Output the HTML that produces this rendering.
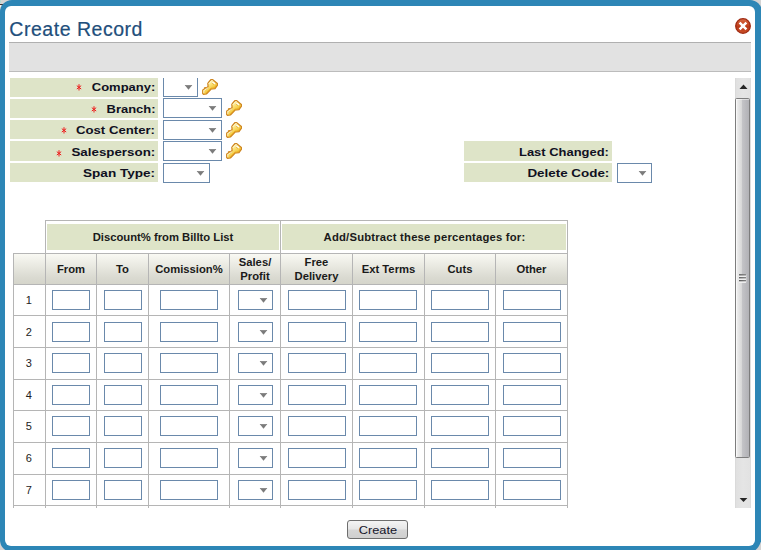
<!DOCTYPE html>
<html><head><meta charset="utf-8"><title>Create Record</title>
<style>
html,body{margin:0;padding:0}
body{width:761px;height:550px;overflow:hidden;position:relative;background:#d4d3d3;font-family:"Liberation Sans",sans-serif}
.a{position:absolute;box-sizing:border-box}
#frame{left:-0.5px;top:0px;width:762px;height:552px;border-radius:12px 12px 12px 12px / 12px 12px 18px 12px;background:#2d86b6}
#inner{left:4.7px;top:5.5px;width:750.3px;height:540.5px;border-radius:6px;background:#fff}
#title{left:9.3px;top:15.7px;font-size:19.5px;line-height:26px;color:#214e7b;white-space:nowrap;letter-spacing:0.53px;-webkit-text-stroke:0.2px #214e7b}
#bar{left:9px;top:42px;width:742px;height:30px;background:#e2e2e2;border-top:1px solid #b0b0b0;border-bottom:1px solid #bcbcbc}
.lb{background:#dee4c8}
.lt{font-weight:bold;font-size:11.5px;color:#10101f;white-space:nowrap;line-height:14px;height:14px}
.sel{background:#fff;border:1px solid #6a89ab}
.inp{background:#fff;border:1px solid #6a89ab}
.vl{width:1px;background:#b5b5b5}
.hl{height:1px;background:#b5b5b5}
.gh{background:#dee4c8;font-weight:bold;font-size:11.25px;color:#1a1a1a;text-align:center;line-height:26px}
.th{background:linear-gradient(#f9f9f3 0%,#f0f0e9 22%,#e5e5dd 50%,#dadad1 78%,#d5d5cb 100%);font-weight:bold;font-size:11.25px;color:#1a1a1a;text-align:center;display:flex;align-items:center;justify-content:center;line-height:14px}
.rn{font-size:11px;color:#222;text-align:center;width:31px;left:13.3px;line-height:14px}
#btn{left:347px;top:520px;width:61px;height:19px;border:1px solid #6e6e6e;border-radius:3px;background:linear-gradient(#f4f4f4 0%,#e6e6e6 48%,#d6d6d6 52%,#cfcfcf 100%);font-size:11.3px;line-height:17px;text-align:center;color:#14142a}
#btn span{display:inline-block;transform:scaleX(1.13);position:relative;top:1.2px;left:0px}
#sbtrack{left:735px;top:78px;width:16px;height:430px;background:linear-gradient(90deg,#e0e0e0,#e5e5e5 50%,#e2e2e2);border-left:1px solid #dadada;border-right:1px solid #dddddd}
#thumb{left:735px;top:98px;width:15px;height:360px;border:1px solid #7d7d7d;border-radius:1.5px;background:linear-gradient(90deg,#f2f2f2 0%,#e4e4e4 22%,#d6d6d6 46%,#c4c4c7 48%,#b8b8bc 80%,#b2b2b6 100%);box-shadow:inset 1px 1px 0 rgba(255,255,255,0.5)}
</style></head>
<body>
<div class="a" style="left:0;top:0;width:1px;height:3px;background:#b4d9d2"></div><div class="a" style="left:0;top:4px;width:3px;height:1px;background:#3d3333"></div><div class="a" style="left:0;top:5px;width:1px;height:2px;background:#f2f2f2"></div><div class="a" id="frame"></div><div class="a" id="inner"></div>
<div class="a" id="title">Create Record</div>
<svg class="a" style="left:735px;top:18px" width="16" height="16" viewBox="0 0 16 16"><defs><linearGradient id="cg" x1="0" y1="0" x2="0" y2="1"><stop offset="0" stop-color="#d66a44"/><stop offset="0.45" stop-color="#c4441f"/><stop offset="0.55" stop-color="#b93a18"/><stop offset="1" stop-color="#cc5029"/></linearGradient></defs><circle cx="8" cy="8" r="7.3" fill="url(#cg)" stroke="#a02a12" stroke-width="1.3"/><path d="M4.6,4.6 L11.4,11.4 M11.4,4.6 L4.6,11.4" stroke="#fff" stroke-width="2.5"/></svg>
<div class="a" id="bar"></div>
<div class="a lb" style="left:10px;top:78px;width:148px;height:19px"></div>
<div class="a lt" style="right:605.6px;top:80.01px;transform:scaleX(1.128);transform-origin:100% 50%">Company:</div>
<svg class="a" style="left:75.05px;top:83.4px" width="8" height="9" viewBox="0 0 8 9"><path d="M4,1.2 V7.5 M1.8,2.7 L6.2,6.0 M6.2,2.7 L1.8,6.0" stroke="#ee1c1c" stroke-width="1.0" fill="none"/></svg>
<div class="a lb" style="left:10px;top:99px;width:148px;height:19px"></div>
<div class="a lt" style="right:605.7px;top:101.51px;transform:scaleX(1.125);transform-origin:100% 50%">Branch:</div>
<svg class="a" style="left:90.45px;top:104.9px" width="8" height="9" viewBox="0 0 8 9"><path d="M4,1.2 V7.5 M1.8,2.7 L6.2,6.0 M6.2,2.7 L1.8,6.0" stroke="#ee1c1c" stroke-width="1.0" fill="none"/></svg>
<div class="a lb" style="left:10px;top:120px;width:148px;height:19px"></div>
<div class="a lt" style="right:606.1px;top:122.61px;transform:scaleX(1.145);transform-origin:100% 50%">Cost Center:</div>
<svg class="a" style="left:60.349999999999994px;top:126.0px" width="8" height="9" viewBox="0 0 8 9"><path d="M4,1.2 V7.5 M1.8,2.7 L6.2,6.0 M6.2,2.7 L1.8,6.0" stroke="#ee1c1c" stroke-width="1.0" fill="none"/></svg>
<div class="a lb" style="left:10px;top:141px;width:148px;height:20px"></div>
<div class="a lt" style="right:605.7px;top:145.11px;transform:scaleX(1.16);transform-origin:100% 50%">Salesperson:</div>
<svg class="a" style="left:55.15px;top:148.5px" width="8" height="9" viewBox="0 0 8 9"><path d="M4,1.2 V7.5 M1.8,2.7 L6.2,6.0 M6.2,2.7 L1.8,6.0" stroke="#ee1c1c" stroke-width="1.0" fill="none"/></svg>
<div class="a lb" style="left:10px;top:163px;width:148px;height:19px"></div>
<div class="a lt" style="right:605.7px;top:165.61px;transform:scaleX(1.18);transform-origin:100% 50%">Span Type:</div>
<div class="a" style="left:163px;top:78px;width:35px;height:19px;overflow:hidden"><div class="a sel" style="left:0;top:-1px;width:35px;height:20px"><svg class="a" style="right:4px;top:7px" width="9" height="6" viewBox="0 0 9 6"><path d="M0.7,0 H8.3 L4.5,4.7 Z" fill="#7b7b7b"/><rect x="1" y="0" width="7" height="1" fill="#8c8c8c"/></svg></div></div>
<div class="a sel" style="left:163px;top:98px;width:59px;height:20px"><svg class="a" style="right:4px;top:7px" width="9" height="6" viewBox="0 0 9 6"><path d="M0.7,0 H8.3 L4.5,4.7 Z" fill="#7b7b7b"/><rect x="1" y="0" width="7" height="1" fill="#8c8c8c"/></svg></div>
<div class="a sel" style="left:163px;top:120px;width:59px;height:20px"><svg class="a" style="right:4px;top:7px" width="9" height="6" viewBox="0 0 9 6"><path d="M0.7,0 H8.3 L4.5,4.7 Z" fill="#7b7b7b"/><rect x="1" y="0" width="7" height="1" fill="#8c8c8c"/></svg></div>
<div class="a sel" style="left:163px;top:141px;width:59px;height:20px"><svg class="a" style="right:4px;top:7px" width="9" height="6" viewBox="0 0 9 6"><path d="M0.7,0 H8.3 L4.5,4.7 Z" fill="#7b7b7b"/><rect x="1" y="0" width="7" height="1" fill="#8c8c8c"/></svg></div>
<div class="a sel" style="left:163px;top:163px;width:47px;height:20px"><svg class="a" style="right:4px;top:7px" width="9" height="6" viewBox="0 0 9 6"><path d="M0.7,0 H8.3 L4.5,4.7 Z" fill="#7b7b7b"/><rect x="1" y="0" width="7" height="1" fill="#8c8c8c"/></svg></div>
<svg class="a" style="left:202px;top:79px" width="16" height="16" viewBox="0 0 16 16"><defs><linearGradient id="kg0" x1="0.25" y1="0.15" x2="0.7" y2="0.8"><stop offset="0" stop-color="#fff6c0"/><stop offset="0.4" stop-color="#fbe27c"/><stop offset="0.75" stop-color="#f4c93f"/><stop offset="1" stop-color="#eab126"/></linearGradient></defs><path d="M9.1,0.55 L10.5,0.55 L15.4,4.4 L15.5,6.2 L13.0,9.6 L10.4,10.0 L9.4,9.8 L4.4,15.0 L1.5,15.3 L0.7,14.5 L0.7,11.0 L2.3,10.2 L2.5,8.9 L3.7,8.7 L4.3,9.5 L5.5,8.0 L6.1,7.5 L5.8,4.4 L6.8,3.0 Z" fill="url(#kg0)" stroke="#cf8620" stroke-width="1.25" stroke-linejoin="round"/><path d="M7.0,4.6 L9.6,1.7 L10.2,1.7" stroke="#fffbe2" stroke-width="0.9" fill="none" stroke-linecap="round"/><path d="M1.8,11.6 L1.8,13.9 M2.2,11.3 L5.6,9.0" stroke="#fffbe2" stroke-width="0.9" fill="none" stroke-linecap="round" opacity="0.9"/><path d="M4.6,13.8 L9.2,9.0 L10.6,9.0 L12.5,8.7 L14.3,6.0" stroke="#e9ab22" stroke-width="0.9" fill="none" stroke-linejoin="round" opacity="0.85"/><path d="M10.9,3.4 L12.6,4.6" stroke="#fffef8" stroke-width="1.3" stroke-linecap="round"/><path d="M10.4,4.4 L12.0,5.6" stroke="#dd9f25" stroke-width="0.8" stroke-linecap="round" opacity="0.75"/></svg>
<svg class="a" style="left:226px;top:100px" width="16" height="16" viewBox="0 0 16 16"><defs><linearGradient id="kg1" x1="0.25" y1="0.15" x2="0.7" y2="0.8"><stop offset="0" stop-color="#fff6c0"/><stop offset="0.4" stop-color="#fbe27c"/><stop offset="0.75" stop-color="#f4c93f"/><stop offset="1" stop-color="#eab126"/></linearGradient></defs><path d="M9.1,0.55 L10.5,0.55 L15.4,4.4 L15.5,6.2 L13.0,9.6 L10.4,10.0 L9.4,9.8 L4.4,15.0 L1.5,15.3 L0.7,14.5 L0.7,11.0 L2.3,10.2 L2.5,8.9 L3.7,8.7 L4.3,9.5 L5.5,8.0 L6.1,7.5 L5.8,4.4 L6.8,3.0 Z" fill="url(#kg1)" stroke="#cf8620" stroke-width="1.25" stroke-linejoin="round"/><path d="M7.0,4.6 L9.6,1.7 L10.2,1.7" stroke="#fffbe2" stroke-width="0.9" fill="none" stroke-linecap="round"/><path d="M1.8,11.6 L1.8,13.9 M2.2,11.3 L5.6,9.0" stroke="#fffbe2" stroke-width="0.9" fill="none" stroke-linecap="round" opacity="0.9"/><path d="M4.6,13.8 L9.2,9.0 L10.6,9.0 L12.5,8.7 L14.3,6.0" stroke="#e9ab22" stroke-width="0.9" fill="none" stroke-linejoin="round" opacity="0.85"/><path d="M10.9,3.4 L12.6,4.6" stroke="#fffef8" stroke-width="1.3" stroke-linecap="round"/><path d="M10.4,4.4 L12.0,5.6" stroke="#dd9f25" stroke-width="0.8" stroke-linecap="round" opacity="0.75"/></svg>
<svg class="a" style="left:226px;top:122px" width="16" height="16" viewBox="0 0 16 16"><defs><linearGradient id="kg2" x1="0.25" y1="0.15" x2="0.7" y2="0.8"><stop offset="0" stop-color="#fff6c0"/><stop offset="0.4" stop-color="#fbe27c"/><stop offset="0.75" stop-color="#f4c93f"/><stop offset="1" stop-color="#eab126"/></linearGradient></defs><path d="M9.1,0.55 L10.5,0.55 L15.4,4.4 L15.5,6.2 L13.0,9.6 L10.4,10.0 L9.4,9.8 L4.4,15.0 L1.5,15.3 L0.7,14.5 L0.7,11.0 L2.3,10.2 L2.5,8.9 L3.7,8.7 L4.3,9.5 L5.5,8.0 L6.1,7.5 L5.8,4.4 L6.8,3.0 Z" fill="url(#kg2)" stroke="#cf8620" stroke-width="1.25" stroke-linejoin="round"/><path d="M7.0,4.6 L9.6,1.7 L10.2,1.7" stroke="#fffbe2" stroke-width="0.9" fill="none" stroke-linecap="round"/><path d="M1.8,11.6 L1.8,13.9 M2.2,11.3 L5.6,9.0" stroke="#fffbe2" stroke-width="0.9" fill="none" stroke-linecap="round" opacity="0.9"/><path d="M4.6,13.8 L9.2,9.0 L10.6,9.0 L12.5,8.7 L14.3,6.0" stroke="#e9ab22" stroke-width="0.9" fill="none" stroke-linejoin="round" opacity="0.85"/><path d="M10.9,3.4 L12.6,4.6" stroke="#fffef8" stroke-width="1.3" stroke-linecap="round"/><path d="M10.4,4.4 L12.0,5.6" stroke="#dd9f25" stroke-width="0.8" stroke-linecap="round" opacity="0.75"/></svg>
<svg class="a" style="left:226px;top:143px" width="16" height="16" viewBox="0 0 16 16"><defs><linearGradient id="kg3" x1="0.25" y1="0.15" x2="0.7" y2="0.8"><stop offset="0" stop-color="#fff6c0"/><stop offset="0.4" stop-color="#fbe27c"/><stop offset="0.75" stop-color="#f4c93f"/><stop offset="1" stop-color="#eab126"/></linearGradient></defs><path d="M9.1,0.55 L10.5,0.55 L15.4,4.4 L15.5,6.2 L13.0,9.6 L10.4,10.0 L9.4,9.8 L4.4,15.0 L1.5,15.3 L0.7,14.5 L0.7,11.0 L2.3,10.2 L2.5,8.9 L3.7,8.7 L4.3,9.5 L5.5,8.0 L6.1,7.5 L5.8,4.4 L6.8,3.0 Z" fill="url(#kg3)" stroke="#cf8620" stroke-width="1.25" stroke-linejoin="round"/><path d="M7.0,4.6 L9.6,1.7 L10.2,1.7" stroke="#fffbe2" stroke-width="0.9" fill="none" stroke-linecap="round"/><path d="M1.8,11.6 L1.8,13.9 M2.2,11.3 L5.6,9.0" stroke="#fffbe2" stroke-width="0.9" fill="none" stroke-linecap="round" opacity="0.9"/><path d="M4.6,13.8 L9.2,9.0 L10.6,9.0 L12.5,8.7 L14.3,6.0" stroke="#e9ab22" stroke-width="0.9" fill="none" stroke-linejoin="round" opacity="0.85"/><path d="M10.9,3.4 L12.6,4.6" stroke="#fffef8" stroke-width="1.3" stroke-linecap="round"/><path d="M10.4,4.4 L12.0,5.6" stroke="#dd9f25" stroke-width="0.8" stroke-linecap="round" opacity="0.75"/></svg>
<div class="a lb" style="left:464px;top:141px;width:148px;height:20px"></div>
<div class="a lt" style="right:152.39999999999998px;top:145.11px;transform:scaleX(1.125);transform-origin:100% 50%">Last Changed:</div>
<div class="a lb" style="left:464px;top:163px;width:148px;height:19px"></div>
<div class="a lt" style="right:151.79999999999995px;top:165.61px;transform:scaleX(1.165);transform-origin:100% 50%">Delete Code:</div>
<div class="a sel" style="left:617px;top:163px;width:35px;height:20px"><svg class="a" style="right:4px;top:7px" width="9" height="6" viewBox="0 0 9 6"><path d="M0.7,0 H8.3 L4.5,4.7 Z" fill="#7b7b7b"/><rect x="1" y="0" width="7" height="1" fill="#8c8c8c"/></svg></div>
<div class="a hl" style="left:45px;top:220px;width:523px"></div>
<div class="a gh" style="left:47px;top:224px;width:232px;height:26px">Discount% from Billto List</div>
<div class="a gh" style="left:282px;top:224px;width:284px;height:26px;letter-spacing:0.21px;text-indent:1px">Add/Subtract these percentages for:</div>
<div class="a vl" style="left:45px;top:220px;height:34px"></div>
<div class="a vl" style="left:280px;top:220px;height:34px"></div>
<div class="a vl" style="left:567px;top:220px;height:34px"></div>
<div class="a th" style="left:14px;top:254px;width:31px;height:30px"><span></span></div>
<div class="a th" style="left:46px;top:254px;width:50px;height:30px"><span>From</span></div>
<div class="a th" style="left:97px;top:254px;width:51px;height:30px"><span>To</span></div>
<div class="a th" style="left:149px;top:254px;width:80px;height:30px"><span>Comission%</span></div>
<div class="a th" style="left:230px;top:254px;width:50px;height:30px"><span>Sales/<br>Profit</span></div>
<div class="a th" style="left:281px;top:254px;width:71px;height:30px"><span>Free<br>Delivery</span></div>
<div class="a th" style="left:353px;top:254px;width:71px;height:30px"><span>Ext Terms</span></div>
<div class="a th" style="left:425px;top:254px;width:70px;height:30px"><span>Cuts</span></div>
<div class="a th" style="left:496px;top:254px;width:71px;height:30px"><span>Other</span></div>
<div class="a hl" style="left:13px;top:253px;width:555px"></div>
<div class="a hl" style="left:13px;top:284px;width:555px"></div>
<div class="a hl" style="left:13px;top:315px;width:555px"></div>
<div class="a hl" style="left:13px;top:347px;width:555px"></div>
<div class="a hl" style="left:13px;top:379px;width:555px"></div>
<div class="a hl" style="left:13px;top:410px;width:555px"></div>
<div class="a hl" style="left:13px;top:442px;width:555px"></div>
<div class="a hl" style="left:13px;top:474px;width:555px"></div>
<div class="a hl" style="left:13px;top:505px;width:555px"></div>
<div class="a vl" style="left:13px;top:253px;height:255px"></div>
<div class="a vl" style="left:45px;top:253px;height:255px"></div>
<div class="a vl" style="left:96px;top:253px;height:255px"></div>
<div class="a vl" style="left:148px;top:253px;height:255px"></div>
<div class="a vl" style="left:229px;top:253px;height:255px"></div>
<div class="a vl" style="left:280px;top:253px;height:255px"></div>
<div class="a vl" style="left:352px;top:253px;height:255px"></div>
<div class="a vl" style="left:424px;top:253px;height:255px"></div>
<div class="a vl" style="left:495px;top:253px;height:255px"></div>
<div class="a vl" style="left:567px;top:253px;height:255px"></div>
<div class="a rn" style="top:293px">1</div>
<div class="a inp" style="left:52px;top:290px;width:38px;height:20px"></div>
<div class="a inp" style="left:104px;top:290px;width:38px;height:20px"></div>
<div class="a inp" style="left:160px;top:290px;width:58px;height:20px"></div>
<div class="a sel" style="left:238px;top:290px;width:35px;height:20px"><svg class="a" style="right:4px;top:7px" width="9" height="6" viewBox="0 0 9 6"><path d="M0.7,0 H8.3 L4.5,4.7 Z" fill="#7b7b7b"/><rect x="1" y="0" width="7" height="1" fill="#8c8c8c"/></svg></div>
<div class="a inp" style="left:288px;top:290px;width:58px;height:20px"></div>
<div class="a inp" style="left:359px;top:290px;width:58px;height:20px"></div>
<div class="a inp" style="left:431px;top:290px;width:58px;height:20px"></div>
<div class="a inp" style="left:503px;top:290px;width:58px;height:20px"></div>
<div class="a rn" style="top:325px">2</div>
<div class="a inp" style="left:52px;top:322px;width:38px;height:20px"></div>
<div class="a inp" style="left:104px;top:322px;width:38px;height:20px"></div>
<div class="a inp" style="left:160px;top:322px;width:58px;height:20px"></div>
<div class="a sel" style="left:238px;top:322px;width:35px;height:20px"><svg class="a" style="right:4px;top:7px" width="9" height="6" viewBox="0 0 9 6"><path d="M0.7,0 H8.3 L4.5,4.7 Z" fill="#7b7b7b"/><rect x="1" y="0" width="7" height="1" fill="#8c8c8c"/></svg></div>
<div class="a inp" style="left:288px;top:322px;width:58px;height:20px"></div>
<div class="a inp" style="left:359px;top:322px;width:58px;height:20px"></div>
<div class="a inp" style="left:431px;top:322px;width:58px;height:20px"></div>
<div class="a inp" style="left:503px;top:322px;width:58px;height:20px"></div>
<div class="a rn" style="top:356px">3</div>
<div class="a inp" style="left:52px;top:353px;width:38px;height:20px"></div>
<div class="a inp" style="left:104px;top:353px;width:38px;height:20px"></div>
<div class="a inp" style="left:160px;top:353px;width:58px;height:20px"></div>
<div class="a sel" style="left:238px;top:353px;width:35px;height:20px"><svg class="a" style="right:4px;top:7px" width="9" height="6" viewBox="0 0 9 6"><path d="M0.7,0 H8.3 L4.5,4.7 Z" fill="#7b7b7b"/><rect x="1" y="0" width="7" height="1" fill="#8c8c8c"/></svg></div>
<div class="a inp" style="left:288px;top:353px;width:58px;height:20px"></div>
<div class="a inp" style="left:359px;top:353px;width:58px;height:20px"></div>
<div class="a inp" style="left:431px;top:353px;width:58px;height:20px"></div>
<div class="a inp" style="left:503px;top:353px;width:58px;height:20px"></div>
<div class="a rn" style="top:388px">4</div>
<div class="a inp" style="left:52px;top:385px;width:38px;height:20px"></div>
<div class="a inp" style="left:104px;top:385px;width:38px;height:20px"></div>
<div class="a inp" style="left:160px;top:385px;width:58px;height:20px"></div>
<div class="a sel" style="left:238px;top:385px;width:35px;height:20px"><svg class="a" style="right:4px;top:7px" width="9" height="6" viewBox="0 0 9 6"><path d="M0.7,0 H8.3 L4.5,4.7 Z" fill="#7b7b7b"/><rect x="1" y="0" width="7" height="1" fill="#8c8c8c"/></svg></div>
<div class="a inp" style="left:288px;top:385px;width:58px;height:20px"></div>
<div class="a inp" style="left:359px;top:385px;width:58px;height:20px"></div>
<div class="a inp" style="left:431px;top:385px;width:58px;height:20px"></div>
<div class="a inp" style="left:503px;top:385px;width:58px;height:20px"></div>
<div class="a rn" style="top:419px">5</div>
<div class="a inp" style="left:52px;top:416px;width:38px;height:20px"></div>
<div class="a inp" style="left:104px;top:416px;width:38px;height:20px"></div>
<div class="a inp" style="left:160px;top:416px;width:58px;height:20px"></div>
<div class="a sel" style="left:238px;top:416px;width:35px;height:20px"><svg class="a" style="right:4px;top:7px" width="9" height="6" viewBox="0 0 9 6"><path d="M0.7,0 H8.3 L4.5,4.7 Z" fill="#7b7b7b"/><rect x="1" y="0" width="7" height="1" fill="#8c8c8c"/></svg></div>
<div class="a inp" style="left:288px;top:416px;width:58px;height:20px"></div>
<div class="a inp" style="left:359px;top:416px;width:58px;height:20px"></div>
<div class="a inp" style="left:431px;top:416px;width:58px;height:20px"></div>
<div class="a inp" style="left:503px;top:416px;width:58px;height:20px"></div>
<div class="a rn" style="top:451px">6</div>
<div class="a inp" style="left:52px;top:448px;width:38px;height:20px"></div>
<div class="a inp" style="left:104px;top:448px;width:38px;height:20px"></div>
<div class="a inp" style="left:160px;top:448px;width:58px;height:20px"></div>
<div class="a sel" style="left:238px;top:448px;width:35px;height:20px"><svg class="a" style="right:4px;top:7px" width="9" height="6" viewBox="0 0 9 6"><path d="M0.7,0 H8.3 L4.5,4.7 Z" fill="#7b7b7b"/><rect x="1" y="0" width="7" height="1" fill="#8c8c8c"/></svg></div>
<div class="a inp" style="left:288px;top:448px;width:58px;height:20px"></div>
<div class="a inp" style="left:359px;top:448px;width:58px;height:20px"></div>
<div class="a inp" style="left:431px;top:448px;width:58px;height:20px"></div>
<div class="a inp" style="left:503px;top:448px;width:58px;height:20px"></div>
<div class="a rn" style="top:483px">7</div>
<div class="a inp" style="left:52px;top:480px;width:38px;height:20px"></div>
<div class="a inp" style="left:104px;top:480px;width:38px;height:20px"></div>
<div class="a inp" style="left:160px;top:480px;width:58px;height:20px"></div>
<div class="a sel" style="left:238px;top:480px;width:35px;height:20px"><svg class="a" style="right:4px;top:7px" width="9" height="6" viewBox="0 0 9 6"><path d="M0.7,0 H8.3 L4.5,4.7 Z" fill="#7b7b7b"/><rect x="1" y="0" width="7" height="1" fill="#8c8c8c"/></svg></div>
<div class="a inp" style="left:288px;top:480px;width:58px;height:20px"></div>
<div class="a inp" style="left:359px;top:480px;width:58px;height:20px"></div>
<div class="a inp" style="left:431px;top:480px;width:58px;height:20px"></div>
<div class="a inp" style="left:503px;top:480px;width:58px;height:20px"></div>
<div class="a" id="sbtrack"></div>
<svg class="a" style="left:735px;top:78px" width="16" height="20" viewBox="0 0 16 20"><path d="M4.5,11 L8.5,6.5 L12.5,11 Z" fill="#262626"/></svg>
<svg class="a" style="left:735px;top:488px" width="16" height="20" viewBox="0 0 16 20"><path d="M4.6,10 L12.4,10 L8.5,14 Z" fill="#262626"/></svg>
<div class="a" id="thumb"></div>
<svg class="a" style="left:738px;top:272px" width="10" height="12" viewBox="0 0 10 12"><defs><linearGradient id="gg" x1="0" y1="0" x2="1" y2="0"><stop offset="0" stop-color="#1c1c1c"/><stop offset="1" stop-color="#5a5a5a"/></linearGradient></defs><rect x="0.8" y="2.2" width="7.6" height="8.8" rx="1" fill="#ececec" opacity="0.8"/><g fill="url(#gg)"><rect x="1" y="2.4" width="7" height="1.2"/><rect x="1" y="5.35" width="7" height="1.2"/><rect x="1" y="8.3" width="7" height="1.2"/></g><g fill="#fafafa"><rect x="1" y="3.6" width="7" height="0.9"/><rect x="1" y="6.55" width="7" height="0.9"/><rect x="1" y="9.5" width="7" height="0.9"/></g></svg>
<div class="a" id="btn"><span>Create</span></div>
</body></html>
